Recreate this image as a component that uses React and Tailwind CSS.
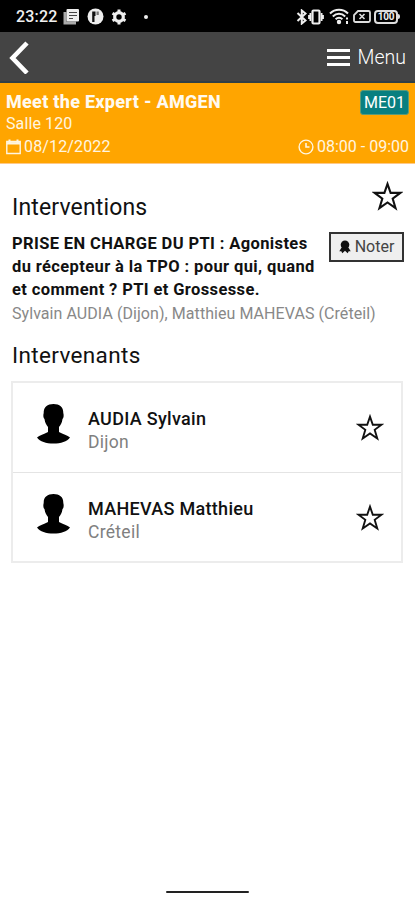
import React from "react";

const speakers = [
  { id: 1, name: "AUDIA Sylvain", city: "Dijon" },
  { id: 2, name: "MAHEVAS Matthieu", city: "Créteil" },
];

const App = () => {
  return (
    <div className="flex h-[900px] w-[415px] flex-col overflow-hidden bg-white font-['Roboto',sans-serif] text-black">
      <StatusBar />

      {/* NAVBAR */}
      <div className="flex h-[51px] shrink-0 items-center justify-between border-b-2 border-[#2f4046] bg-[#444444] pr-[9px] pl-[9px] text-white">
        <svg width="20" height="34" viewBox="0 0 20 34" fill="none" stroke="white" strokeWidth="4.6">
          <path d="M18 3 L3.5 18 L18 33" />
        </svg>
        <div className="flex items-center gap-2 pt-[2px]">
          <div className="flex flex-col gap-[4px]">
            <span className="h-[3px] w-[23px] bg-white" />
            <span className="h-[3px] w-[23px] bg-white" />
            <span className="h-[3px] w-[23px] bg-white" />
          </div>
          <span className="text-[19.5px] leading-6 font-light">Menu</span>
        </div>
      </div>

      {/* SESSION HEADER */}
      <div className="flex h-[81px] shrink-0 flex-col border-b border-[#ffc987] bg-[#ffa500] pt-[7px] pr-[6px] pl-[6px] text-[#fff6e0]">
        <div className="flex h-[23px] items-start justify-between">
          <h1 className="text-[18px] leading-[23px] font-extrabold tracking-[0.28px] whitespace-nowrap text-[#fffaf0]">
            Meet the Expert - AMGEN
          </h1>
          <span className="flex h-[25px] w-[49px] items-center justify-center rounded-[3px] border border-[#5b9a78] bg-[#087f80] text-[16px] text-white">
            ME01
          </span>
        </div>
        <p className="text-[16px] leading-[22px] tracking-[0.1px]">Salle 120</p>
        <div className="flex h-[24px] items-center justify-between text-[16px] leading-6">
          <div className="flex items-center gap-[3px]">
            <CalendarIcon />
            <span className="tracking-[0.15px]">08/12/2022</span>
          </div>
          <div className="flex items-center gap-[3px]">
            <ClockIcon />
            <span>08:00 - 09:00</span>
          </div>
        </div>
      </div>

      {/* CONTENT */}
      <div className="flex flex-col pr-[12px] pl-[12px]">
        <div className="flex h-[68px] items-start justify-between pt-[17px]">
          <h2 className="pt-[11px] text-[23px] leading-[31px] tracking-[0.15px] text-[#111]">Interventions</h2>
          <Star className="h-[31px] w-[31px]" />
        </div>

        <div className="flex items-start justify-between">
          <h3 className="text-[16.5px] leading-[23px] font-bold tracking-[0.38px] whitespace-nowrap text-[#111]">
            PRISE EN CHARGE DU PTI : Agonistes
            <br />
            du récepteur à la TPO : pour qui, quand
            <br />
            et comment ? PTI et Grossesse.
          </h3>
          <button className="-mr-px flex h-[30px] w-[75px] items-center justify-center gap-[4px] border-2 border-[#333] bg-[#efefef] text-[16px] text-[#444]">
            <AwardIcon />
            <span>Noter</span>
          </button>
        </div>
        <p className="pt-px text-[16px] leading-[23px] tracking-[0.06px] whitespace-nowrap text-[#888]">
          Sylvain AUDIA (Dijon), Matthieu MAHEVAS (Créteil)
        </p>

        <h2 className="mt-[15px] text-[22.5px] leading-[30px] tracking-[0.35px] text-[#111]">Intervenants</h2>

        <div className="mt-[11px] -ml-px flex w-[392px] flex-col border-2 border-[#ececec]">
          {speakers.map((s) => (
            <SpeakerRow key={s.id} speaker={s} />
          ))}
        </div>
      </div>

      {/* HOME INDICATOR */}
      <div className="mx-auto mt-auto mb-[7px] h-[2px] w-[83px] rounded-full bg-[#222]" />
    </div>
  );
};

const SpeakerRow = ({ speaker }) => (
  <div className="flex h-[90px] items-start border-b border-[#e4e4e4] pt-[20px] pr-[17px] pl-[23px] last:h-[88px] last:border-b-0">
    <Silhouette />
    <div className="ml-[17px] flex flex-col pt-[4px]">
      <p className="text-[18px] leading-[23px] font-medium tracking-[0.3px] text-[#111]">{speaker.name}</p>
      <p className="text-[17.5px] leading-[24px] tracking-[0.3px] text-[#808080]">{speaker.city}</p>
    </div>
    <Star className="mt-[11px] ml-auto h-[28px] w-[28px]" />
  </div>
);

const Star = ({ className }) => (
  <svg className={className} viewBox="0 0 30 30" fill="none" stroke="#111" strokeWidth="2">
    <path d="M15 2.8 L18 11.5 H27.4 L20 17 L22.8 26.3 L15 20.8 L7.2 26.3 L10 17 L2.6 11.5 H12 Z" />
  </svg>
);

const Silhouette = () => (
  <svg width="35" height="42" viewBox="0 0 35 42" fill="black">
    <path d="M17.5 1 C11.5 1 7.5 4 7.7 10 C7 12 7.3 15 8.5 16 C9 20 10.5 22 12 24 V29 C8 31.5 3.5 32 1 34.5 C4 38.5 10 40.5 17.5 40.5 C25 40.5 31 38.5 34 34.5 C31.5 32 27 31.5 23 29 V24 C24.5 22 26 20 26.5 16 C27.7 15 28 12 27.3 10 C27.5 4 23.5 1 17.5 1 Z" />
  </svg>
);

const CalendarIcon = () => (
  <svg width="15" height="16" viewBox="0 0 15 16" fill="none" stroke="#fff6e0" strokeWidth="1.4">
    <path d="M0.8 2.5 H14.2 V14.5 H0.8 Z" />
    <path d="M0.8 4.3 H14.2" strokeWidth="2.4" />
    <path d="M3.5 0.5 V4 M11.5 0.5 V4" strokeWidth="2" />
  </svg>
);

const ClockIcon = () => (
  <svg width="16" height="16" viewBox="0 0 16 16" fill="none" stroke="#fff6e0" strokeWidth="1.4">
    <circle cx="8" cy="8" r="6.9" />
    <path d="M8 4 V8 H11.5" strokeWidth="1.6" />
  </svg>
);

const AwardIcon = () => (
  <svg width="12" height="14" viewBox="0 0 12 14" fill="#111">
    <circle cx="6" cy="4.7" r="4.3" />
    <path d="M2.6 7.5 L0.3 11.2 L2.3 11.3 L3.3 13.3 L6 10.8 L8.7 13.3 L9.7 11.3 L11.7 11.2 L9.4 7.5 Z" />
  </svg>
);

const StatusBar = () => (
  <div className="flex h-[32px] shrink-0 items-center justify-between bg-black pt-px pr-[15px] pl-[16px] text-[#f0f0f0]">
    <div className="flex items-center">
      <span className="w-[42px] text-[16px] font-medium tracking-[0.2px]">23:22</span>
      {/* news */}
      <svg className="ml-[5px]" width="17" height="17" viewBox="0 0 17 17">
        <path d="M2 4 V15 H13" fill="none" stroke="#aaa" strokeWidth="3" />
        <rect x="3.5" y="1" width="12.5" height="12.5" rx="1" fill="#eee" />
        <path d="M6 4.5 H14 M6 7.5 H14 M6 10.5 H10" stroke="#444" strokeWidth="1.2" />
      </svg>
      <svg className="ml-[7px]" width="17" height="17" viewBox="0 0 17 17">
        <circle cx="8.5" cy="8.5" r="8" fill="#eee" />
        <path d="M5.2 3.5 H8.5 V8 H7.5 V14 H5.2 Z" fill="#111" />
        <path d="M9.5 3.5 H11.8 V7 H9.5 Z" fill="#777" />
      </svg>
      {/* settings */}
      <svg className="ml-[7px]" width="16" height="16" viewBox="0 0 16 16" fill="none" stroke="#eee">
        <circle cx="8" cy="8" r="4.3" strokeWidth="3.2" />
        <path d="M8 0.5 V3 M8 13 V15.5 M1.5 4.3 L3.7 5.5 M12.3 10.5 L14.5 11.7 M1.5 11.7 L3.7 10.5 M12.3 5.5 L14.5 4.3" strokeWidth="3" />
      </svg>
      <span className="ml-[17px] h-[4px] w-[4px] rounded-full bg-[#eee]" />
    </div>

    <div className="flex items-center">
      {/* bluetooth */}
      <svg width="12" height="16" viewBox="0 0 12 16" fill="none" stroke="#eee" strokeWidth="2">
        <path d="M1.5 4 L9.5 11.5 L5.8 14.5 V1.5 L9.5 4.5 L1.5 12" />
      </svg>
      {/* vibrate */}
      <svg className="mr-px" width="16" height="16" viewBox="0 0 16 16" fill="none" stroke="#eee">
        <rect x="4.5" y="1.5" width="7" height="13" rx="1" strokeWidth="2.2" />
        <path d="M2.4 4 V12 M13.6 4 V12 M1 6 V10 M15 6 V10" strokeWidth="1.8" />
      </svg>
      {/* wifi */}
      <svg className="ml-[4px]" width="21" height="17" viewBox="0 0 21 17" fill="none" stroke="#eee" strokeWidth="2">
        <path d="M1 5.5 C6 0.5 14 0.5 19 5.5 M3.8 8.5 C7.5 4.9 12.5 4.9 16.2 8.5 M6.6 11.3 C8.7 9.2 11.3 9.2 13.4 11.3" />
        <circle cx="10" cy="14" r="1.2" fill="#eee" />
        <path d="M18 9.5 V11.5 M18 13 V16" />
      </svg>
      {/* no sim */}
      <svg className="ml-[3px]" width="18" height="13" viewBox="0 0 18 13" fill="none" stroke="#ddd" strokeWidth="1.8">
        <path d="M5 1 H15.5 Q17 1 17 2.5 V10.5 Q17 12 15.5 12 H2.5 Q1 12 1 10.5 V5 Z" />
        <path d="M6.5 4 L11.5 9 M11.5 4 L6.5 9" strokeWidth="1.6" />
      </svg>
      {/* battery */}
      <div className="ml-[3px] flex items-center">
        <span className="flex h-[14px] w-[24px] items-center justify-center rounded-[4px] border-2 border-[#ddd] text-[10px] leading-none font-bold tracking-[-0.2px]">
          100
        </span>
        <span className="h-[5px] w-[2px] rounded-r-sm bg-[#ddd]" />
      </div>
    </div>
  </div>
);

export default App;
